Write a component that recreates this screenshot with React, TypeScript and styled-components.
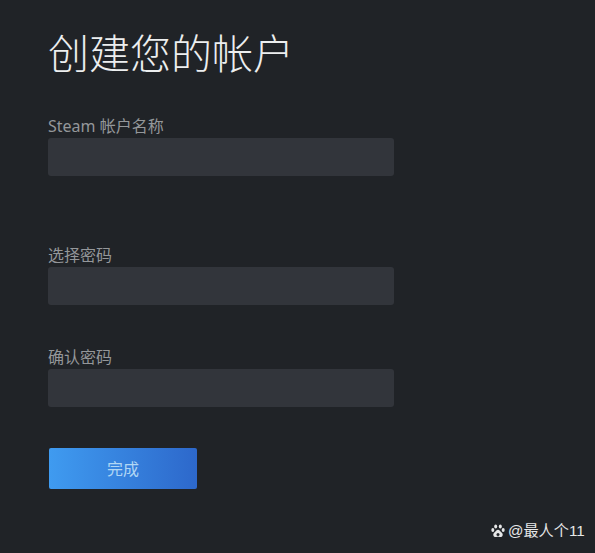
import React from "react";
import styled, { createGlobalStyle } from "styled-components";

const Global = createGlobalStyle`
  html, body { margin: 0; padding: 0; background: #202327; }
  body { font-family: "Noto Sans", "Noto Sans CJK SC", "Liberation Sans", sans-serif; }
`;

const Page = styled.main`
  position: relative;
  width: 595px;
  height: 553px;
  box-sizing: border-box;
  padding: 22px 0 0 48px;
  background: #202327;
  overflow: hidden;
`;

const Title = styled.h1`
  margin: 0;
  height: 58px;
  font-family: "Noto Sans CJK SC", sans-serif;
  font-size: 41px;
  line-height: 58px;
  font-weight: 300;
  color: #eceeef;
`;

const Form = styled.form`
  display: flex;
  flex-direction: column;
  width: 346px;
  margin-top: 34px;
`;

const Field = styled.div<{ $gap: number }>`
  display: flex;
  flex-direction: column;
  margin-bottom: ${(p) => p.$gap}px;
`;

const Label = styled.label`
  height: 24px;
  font-family: "Noto Sans", "Noto Sans CJK SC", sans-serif;
  font-size: 16px;
  line-height: 25px;
  color: #94979a;
  white-space: nowrap;
`;

const Input = styled.div`
  height: 38px;
  border-radius: 3px;
  background: #32353b;
`;

const Submit = styled.button`
  width: 148px;
  height: 41px;
  margin: 1px 0 0 1px;
  padding: 0;
  border: 0;
  border-radius: 2px;
  background: linear-gradient(90deg, #3f9bf0 0%, #2d68cb 100%);
  color: #b0d6f4;
  font-family: "Noto Sans CJK SC", sans-serif;
  font-size: 16px;
  line-height: 39px;
`;

const Watermark = styled.div`
  position: absolute;
  left: 491px;
  top: 522px;
  display: flex;
  align-items: center;
  gap: 3px;
  height: 18px;
  color: #e6e7e8;
  font-family: "Liberation Sans", "Noto Sans CJK SC", sans-serif;
  font-size: 15.2px;
  line-height: 18px;
  white-space: nowrap;
`;

const Paw = () => (
  <svg width="14" height="14" viewBox="0 0 14 14" fill="#e6e7e8" aria-hidden="true">
    <ellipse cx="4.7" cy="2.6" rx="1.5" ry="2" />
    <ellipse cx="9.3" cy="2.6" rx="1.5" ry="2" />
    <ellipse cx="1.8" cy="6" rx="1.5" ry="1.9" />
    <ellipse cx="12.2" cy="6" rx="1.5" ry="1.9" />
    <path d="M7 5.8c1.6 0 2.2 1.5 3.3 2.5 1.2 1 1.7 1.8 1.3 3.2-.4 1.3-1.7 1.8-3 1.5-1-.2-2.2-.2-3.2 0-1.3.3-2.6-.2-3-1.5-.4-1.4.1-2.2 1.3-3.2C4.8 7.3 5.4 5.8 7 5.8z" />
    <circle cx="7" cy="10.4" r="1.5" fill="#202327" />
  </svg>
);

export default function App() {
  return (
    <Page>
      <Global />
      <Title>创建您的帐户</Title>
      <Form onSubmit={(e) => e.preventDefault()}>
        <Field $gap={67}>
          <Label>Steam 帐户名称</Label>
          <Input />
        </Field>
        <Field $gap={40}>
          <Label>选择密码</Label>
          <Input />
        </Field>
        <Field $gap={40}>
          <Label>确认密码</Label>
          <Input />
        </Field>
        <Submit type="button">完成</Submit>
      </Form>
      <Watermark>
        <Paw />
        <span>@最人个11</span>
      </Watermark>
    </Page>
  );
}
